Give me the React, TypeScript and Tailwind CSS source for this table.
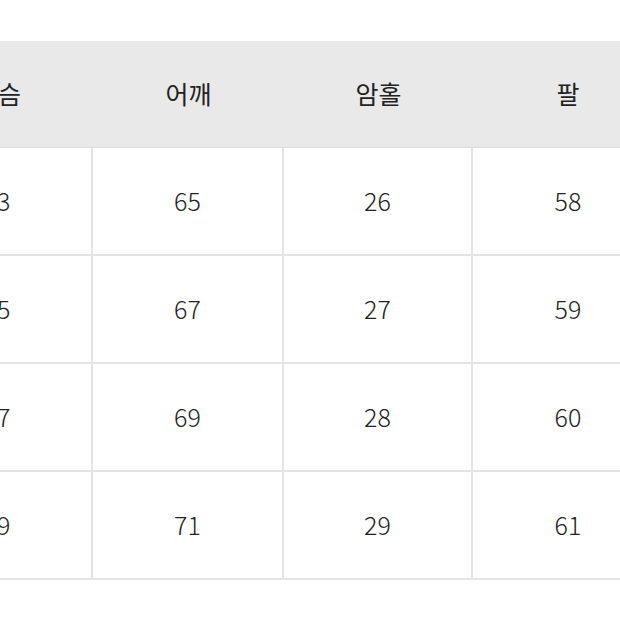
const headers = ["가슴", "어깨", "암홀", "팔"];

const rows: string[][] = [
  ["63", "65", "26", "58"],
  ["65", "67", "27", "59"],
  ["67", "69", "28", "60"],
  ["69", "71", "29", "61"],
];

export default function App() {
  return (
    <div
      className="h-[620px] w-[620px] overflow-hidden bg-white text-[#222]"
      style={{ fontFamily: '"Noto Sans CJK KR", "Noto Sans", sans-serif' }}
    >
      <div className="mt-[41px] ml-[-97px] w-[760px]">
        {/* header row */}
        <div className="grid h-[107px] grid-cols-[190px_191px_189px_190px] border-b border-[#dcdcdc] bg-[#e9e9e9]">
          {headers.map((h) => (
            <div key={h} className="flex items-center justify-center text-[25px]">
              {h}
            </div>
          ))}
        </div>

        {/* body rows */}
        {rows.map((row, i) => (
          <div
            key={i}
            className="grid h-[108px] grid-cols-[190px_191px_189px_190px] border-b-2 border-[#e4e4e4]"
          >
            {row.map((v, j) => (
              <div
                key={j}
                className={`flex items-center justify-center text-[25px] font-light ${
                  j < 3 ? "border-r-2 border-[#e4e4e4]" : ""
                }`}
              >
                {v}
              </div>
            ))}
          </div>
        ))}
      </div>
    </div>
  );
}
